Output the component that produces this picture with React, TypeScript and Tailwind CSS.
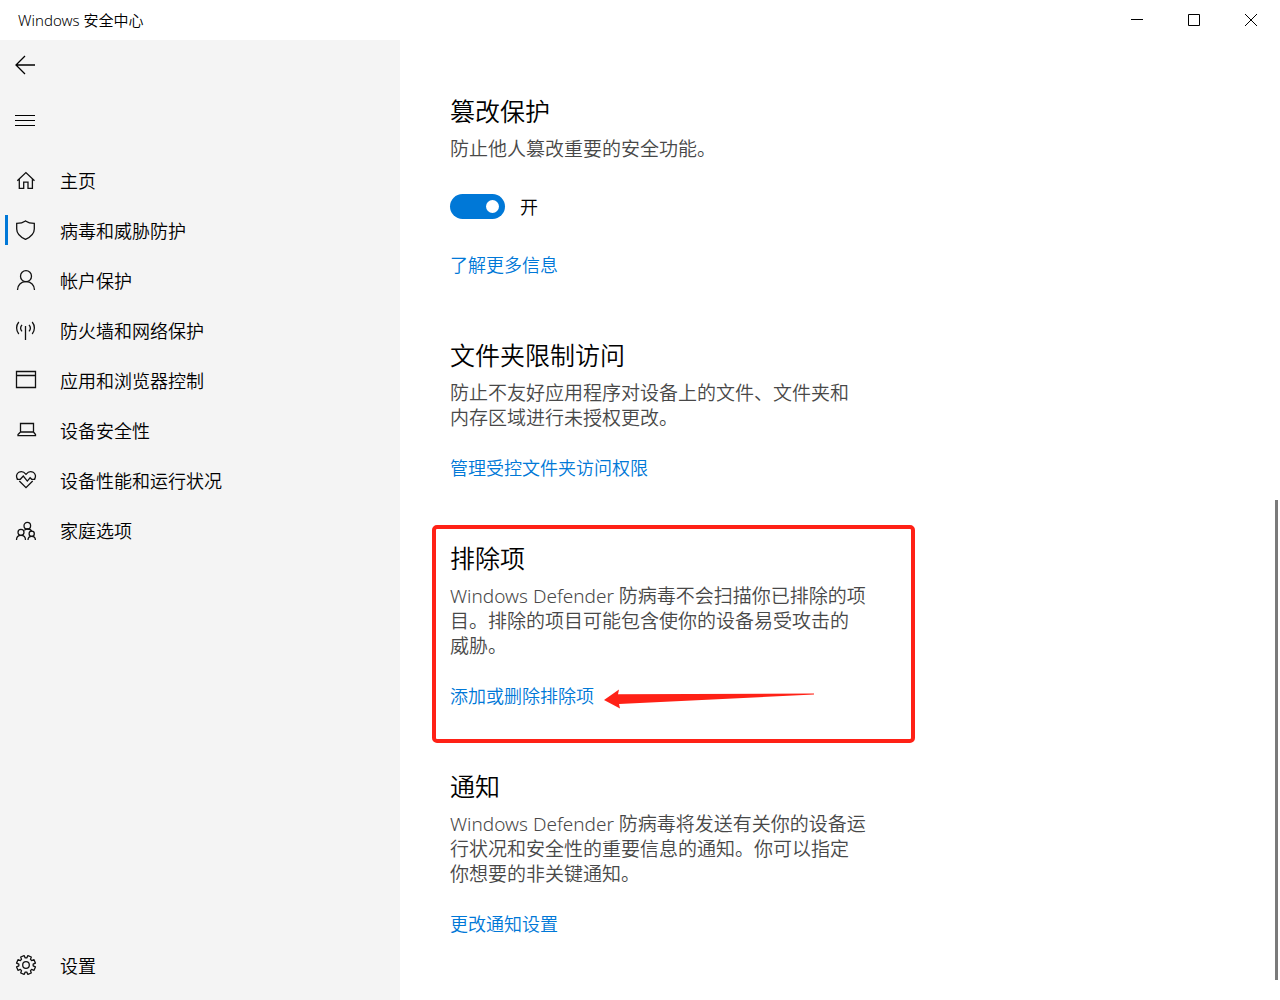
import React, { useState } from 'react';

interface IconProps {
  children: React.ReactNode;
}

const Icon: React.FC<IconProps> = ({ children }) => (
  <svg viewBox="0 0 22 22" className="h-[22px] w-[22px] shrink-0" fill="none" stroke="#111" strokeWidth="1.3" aria-hidden="true">
    {children}
  </svg>
);

// Eight teeth, with a notch at twelve o'clock
const gearPath = () => {
  const points: string[] = [];
  for (let i = 0; i < 8; i++) {
    const mid = -67.5 + i * 45;
    [[-16, 7.2], [-11, 9.6], [11, 9.6], [16, 7.2]].forEach(([offset, r]) => {
      const a = ((mid + offset) * Math.PI) / 180;
      points.push(`${(11 + r * Math.cos(a)).toFixed(2)} ${(10 + r * Math.sin(a)).toFixed(2)}`);
    });
  }
  return `M${points.join('L')}Z`;
};

const navItems = [
  {
    label: '主页',
    icon: <path d="M2.3 10.7 10.9 2.6l8.6 8.1M4.3 9v9.4h4.4v-6.2h4.3v6.2h4.4V9" />,
  },
  {
    label: '病毒和威胁防护',
    icon: <path d="M10.5.9C8.2 2.6 5.2 3.4 1.7 3.4V9c0 4.7 3.6 8 8.8 10.4C15.7 17 19.3 13.7 19.3 9V3.4C15.8 3.4 12.8 2.6 10.5.9Z" />,
  },
  {
    label: '帐户保护',
    icon: (
      <>
        <circle cx="11" cy="6.2" r="5.5" />
        <path d="M2.5 20c0-5 3.5-8.3 8.5-8.3s8.5 3.3 8.5 8.3" />
      </>
    ),
  },
  {
    label: '防火墙和网络保护',
    icon: (
      <path d="M10.5 6v14M3.8 2C.9 5.5.9 10.5 3.8 14M17.2 2c2.9 3.5 2.9 8.5 0 12M7 4.8c-1.7 2-1.7 4.6 0 6.6M14 4.8c1.7 2 1.7 4.6 0 6.6" />
    ),
  },
  {
    label: '应用和浏览器控制',
    icon: <path d="M1.5 1.5h19v16h-19zM1.5 5.5h19" />,
  },
  {
    label: '设备安全性',
    icon: <path d="M5.5 12V3.5h13V12M5.5 12h13l2 2.5v1.2h-17.5v-1.2z" />,
  },
  {
    label: '设备性能和运行状况',
    icon: (
      <>
        <path d="M2.6 9.3C.6 6.5 1.7 3.5 3.8 2.3 6.5.8 9 1.8 11 4.3c2-2.5 4.5-3.5 7.2-2 2.1 1.2 3.2 4.2 1.2 7M4.3 11 11 17.7 17.7 11" />
        <path d="M1.8 9.3h3.5l3-3.2 4 5 2.8-3.3 1.6 1.5h3.5" />
      </>
    ),
  },
  {
    label: '家庭选项',
    icon: (
      <>
        <circle cx="12.3" cy="5.7" r="3.3" />
        <circle cx="6" cy="12.3" r="3" />
        <circle cx="16.7" cy="13.8" r="2.6" />
        <path d="M1.5 20c0-3 1.8-4.7 4.5-4.7s4.5 1.7 4.5 4.7M13 20c0-2.3 1.3-3.6 3.7-3.6s3.7 1.3 3.7 3.6M9.3 10.4c.8-.9 1.8-1.4 3-1.4 2.4 0 4 1 4.5 2.5" />
      </>
    ),
  },
];

const Section: React.FC<{ title: string; text: string; children: React.ReactNode }> = ({ title, text, children }) => (
  <section className="relative">
    <h2 className="text-[25px] leading-8 text-black">{title}</h2>
    <p className="mt-[10px] max-w-[417px] text-[19px] leading-[25px] text-[#484848]">{text}</p>
    {children}
  </section>
);

const TextLink: React.FC<{ children: string }> = ({ children }) => (
  <a href="#" className="text-[18px] leading-[25px] text-[#0078d7] hover:text-gray-500">
    {children}
  </a>
);

const NavButton: React.FC<{ label: string; icon: React.ReactNode; active?: boolean; onClick?: () => void }> = ({
  label,
  icon,
  active,
  onClick,
}) => (
  <button onClick={onClick} className="flex h-[50px] w-full items-center pl-[5px] text-left text-[18px] hover:bg-black/5">
    <span className={`mr-[7px] h-[30px] w-[3px] ${active ? 'bg-[#0078d7]' : ''}`} />
    <span className="flex items-center pt-[2px]">
      <Icon>{icon}</Icon>
      <span className="ml-[23px]">{label}</span>
    </span>
  </button>
);

export default function App() {
  const [active, setActive] = useState(1);
  const [tamper, setTamper] = useState(true);

  return (
    <div className="flex h-screen flex-col overflow-hidden bg-white font-['Noto_Sans','Noto_Sans_CJK_SC',sans-serif] font-[350] text-black">
      <header className="flex h-10 shrink-0 items-center justify-between">
        <h1 className="pl-[18px] text-[15px]">Windows 安全中心</h1>
        <div className="flex h-full pr-px">
          <button aria-label="最小化" className="flex w-[57px] items-center justify-center hover:bg-gray-200">
            <svg width="12" height="12" stroke="#000" fill="none"><path d="M0 5.5h12" /></svg>
          </button>
          <button aria-label="最大化" className="flex w-[57px] items-center justify-center hover:bg-gray-200">
            <svg width="12" height="12" stroke="#000" fill="none"><path d="M.5.5h11v11H.5z" /></svg>
          </button>
          <button aria-label="关闭" className="flex w-[57px] items-center justify-center hover:bg-red-500">
            <svg width="12" height="12" stroke="#000" fill="none"><path d="m0 0 12 12M12 0 0 12" /></svg>
          </button>
        </div>
      </header>

      <div className="flex min-h-0 flex-1">
        <aside className="flex w-[400px] shrink-0 flex-col bg-[#f4f4f4]">
          <button aria-label="返回" className="flex h-[50px] w-[50px] items-center pl-[15px]">
            <svg width="20" height="20" stroke="#000" strokeWidth="1.3" fill="none"><path d="M20 10H1M10 1 1 10l9 9" /></svg>
          </button>
          <button aria-label="菜单" className="mt-[5px] flex h-[50px] w-[50px] items-center pl-[15px]">
            <svg width="20" height="12" stroke="#000" fill="none"><path d="M0 1.5h20M0 6.5h20M0 11.5h20" /></svg>
          </button>
          <nav className="mt-[10px] flex flex-1 flex-col pb-[10px]">
            {navItems.map((item, i) => (
              <NavButton key={item.label} label={item.label} icon={item.icon} active={i === active} onClick={() => setActive(i)} />
            ))}
            <div className="mt-auto">
              <NavButton
                label="设置"
                icon={
                  <>
                    <path d={gearPath()} strokeLinejoin="round" />
                    <circle cx="11" cy="10" r="3.3" />
                  </>
                }
              />
            </div>
          </nav>
        </aside>

        <main className="flex flex-1 flex-col gap-[61px] pl-[50px] pt-[55px]">
          <Section title="篡改保护" text="防止他人篡改重要的安全功能。">
            <label className="mt-8 flex h-[25px] w-fit items-center gap-[15px] text-[18px]">
              <input
                type="checkbox"
                checked={tamper}
                onChange={(e) => setTamper(e.target.checked)}
                className="flex h-[25px] w-[55px] appearance-none items-center rounded-full bg-gray-500 px-[6px] before:h-[13px] before:w-[13px] before:rounded-full before:bg-white checked:justify-end checked:bg-[#0078d7]"
              />
              <span className="pt-[2px]">{tamper ? '开' : '关'}</span>
            </label>
            <div className="mt-[34px] flex">
              <TextLink>了解更多信息</TextLink>
            </div>
          </Section>

          <Section title="文件夹限制访问" text="防止不友好应用程序对设备上的文件、文件夹和内存区域进行未授权更改。">
            <div className="mt-[25px] flex">
              <TextLink>管理受控文件夹访问权限</TextLink>
            </div>
          </Section>

          <Section title="排除项" text="Windows Defender 防病毒不会扫描你已排除的项目。排除的项目可能包含使你的设备易受攻击的威胁。">
            <div className="mt-[25px] flex gap-[10px]">
              <TextLink>添加或删除排除项</TextLink>
              <svg width="211" height="25" viewBox="0 0 211 25" fill="#ff2116" aria-hidden="true">
                <path d="M0 16 15 5.5 14 10.3 210 9.5 210 10.5 15 20 16 24.5Z" />
              </svg>
            </div>
            <div className="pointer-events-none absolute -bottom-[34px] -left-[18px] -top-[17px] w-[483px] rounded-[5px] border-4 border-[#ff2116]" />
          </Section>

          <Section title="通知" text="Windows Defender 防病毒将发送有关你的设备运行状况和安全性的重要信息的通知。你可以指定你想要的非关键通知。">
            <div className="mt-[25px] flex">
              <TextLink>更改通知设置</TextLink>
            </div>
          </Section>
        </main>

        <div className="flex w-[5px] flex-col justify-end">
          <div className="mb-5 h-1/2 w-[3px] bg-[#7a7a7a]" />
        </div>
      </div>
    </div>
  );
}
